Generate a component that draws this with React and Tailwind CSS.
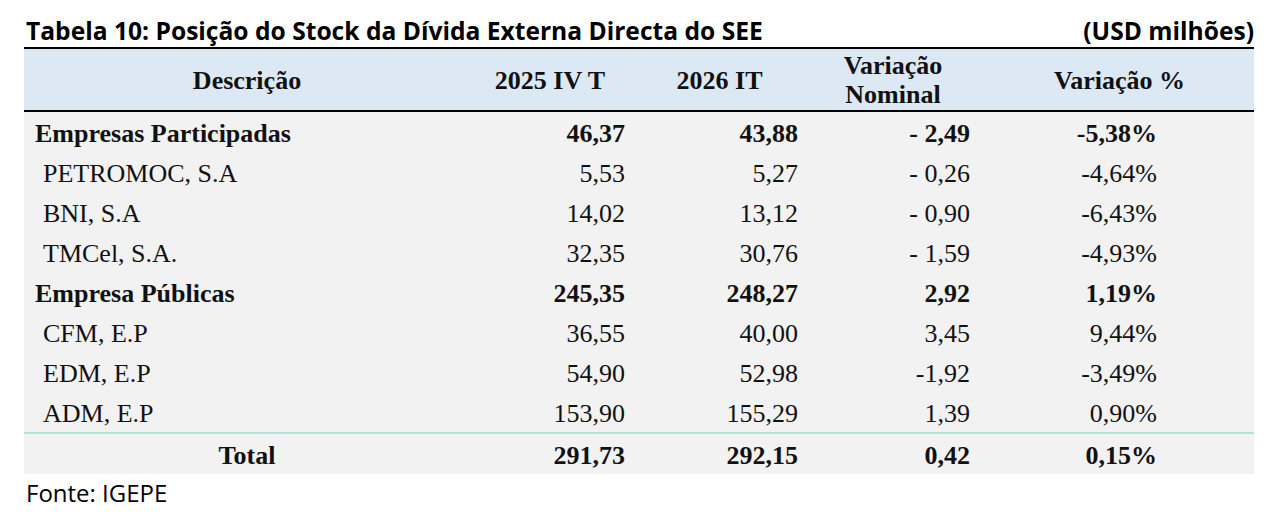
export default function App() {
  const rows = [
    { label: "Empresas Participadas", a: "46,37", b: "43,88", c: "- 2,49", d: "-5,38%", bold: true },
    { label: "PETROMOC, S.A", a: "5,53", b: "5,27", c: "- 0,26", d: "-4,64%" },
    { label: "BNI, S.A", a: "14,02", b: "13,12", c: "- 0,90", d: "-6,43%" },
    { label: "TMCel, S.A.", a: "32,35", b: "30,76", c: "- 1,59", d: "-4,93%" },
    { label: "Empresa Públicas", a: "245,35", b: "248,27", c: "2,92", d: "1,19%", bold: true },
    { label: "CFM, E.P", a: "36,55", b: "40,00", c: "3,45", d: "9,44%" },
    { label: "EDM, E.P", a: "54,90", b: "52,98", c: "-1,92", d: "-3,49%" },
    { label: "ADM, E.P", a: "153,90", b: "155,29", c: "1,39", d: "0,90%" },
  ];

  const cols = "grid grid-cols-[446px_170px_172px_173px_269px]";
  const serif = { fontFamily: '"Liberation Serif", "Times New Roman", serif' };
  const sans = { fontFamily: '"Open Sans", "Noto Sans", sans-serif' };

  return (
    <div className="w-[1280px] h-[521px] bg-white pt-[14px] pl-[24px]">
      <div className="w-[1230px]">
        {/* title */}
        <div
          className="flex justify-between items-end border-b-2 border-black text-[24.6px] font-bold leading-[33px] text-black pl-[2px]"
          style={sans}
        >
          <span>Tabela 10: Posição do Stock da Dívida Externa Directa do SEE</span>
          <span>(USD milhões)</span>
        </div>

        <div style={serif} className="text-[26px] text-[#111]">
          {/* header */}
          <div className={`${cols} h-[63px] pt-[1px] bg-[#dde8f5] border-b-2 border-black font-bold items-center leading-[29px]`}>
            <div className="text-center">Descrição</div>
            <div className="text-center pr-[10px]">2025 IV T</div>
            <div className="text-center pr-[13px]">2026 IT</div>
            <div className="text-center pr-[11px]">
              Variação
              <br />
              Nominal
            </div>
            <div className="text-center">Variação %</div>
          </div>

          {/* body */}
          <div className="bg-[#f2f2f2]">
            {rows.map((r) => (
              <div key={r.label} className={`${cols} h-[40px] pt-[2px] items-center ${r.bold ? "font-bold" : ""}`}>
                <div className={r.bold ? "pl-[11px]" : "pl-[19px]"}>{r.label}</div>
                <div className="text-right pr-[15px]">{r.a}</div>
                <div className="text-right pr-[14px]">{r.b}</div>
                <div className="text-right pr-[15px]">{r.c}</div>
                <div className="text-right pr-[97px]">{r.d}</div>
              </div>
            ))}
            <div className={`${cols} h-[42px] pt-[2px] items-center font-bold border-t-2 border-[#b4e2d6]`}>
              <div className="text-center">Total</div>
              <div className="text-right pr-[15px]">291,73</div>
              <div className="text-right pr-[14px]">292,15</div>
              <div className="text-right pr-[15px]">0,42</div>
              <div className="text-right pr-[97px]">0,15%</div>
            </div>
          </div>
        </div>

        <div className="text-[24px] leading-[32px] text-black pl-[2px] pt-[3px]" style={sans}>
          Fonte: IGEPE
        </div>
      </div>
    </div>
  );
}
